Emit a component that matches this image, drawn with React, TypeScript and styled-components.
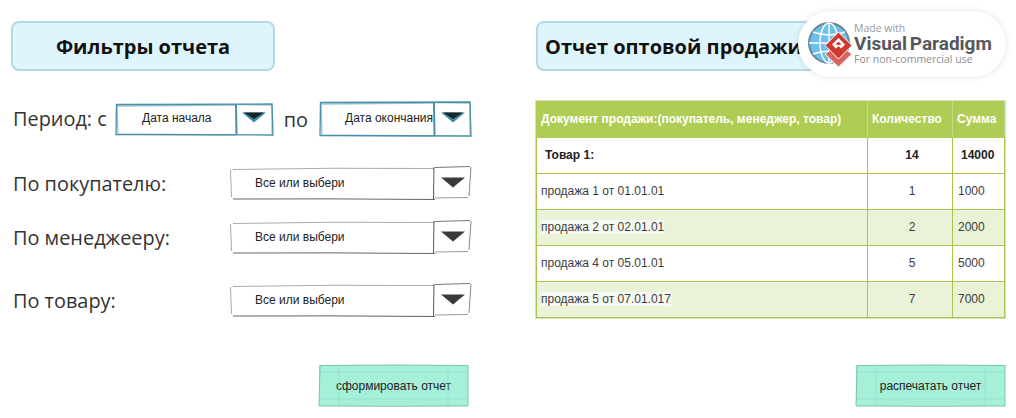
import React from 'react';
import styled, { createGlobalStyle } from 'styled-components';

const GlobalStyle = createGlobalStyle`
  html, body {
    margin: 0;
    padding: 0;
    background: #fff;
  }
`;

const Page = styled.div`
  position: relative;
  width: 1016px;
  height: 418px;
  overflow: hidden;
  display: flex;
  padding: 21px 0 0 11px;
  box-sizing: border-box;
  background: #fff;
`;

const LeftColumn = styled.section`
  width: 525px;
  flex: none;
`;

const RightColumn = styled.section`
  width: 470px;
  flex: none;
`;

const Title = styled.h2<{ $width: number; $center?: boolean }>`
  box-sizing: border-box;
  width: ${p => p.$width}px;
  height: 50px;
  margin: 0;
  padding: ${p => (p.$center ? '0' : '0 0 0 7px')};
  display: flex;
  align-items: center;
  justify-content: ${p => (p.$center ? 'center' : 'flex-start')};
  background: #dff5fd;
  border: 2px solid #b5d8e4;
  border-radius: 8px;
  font: 700 20px 'Open Sans', sans-serif;
  color: #111;
  white-space: nowrap;
`;

const FilterRow = styled.div<{ $top: number; $height: number }>`
  width: 460px;
  height: ${p => p.$height}px;
  margin-top: ${p => p.$top}px;
  display: flex;
  align-items: center;
`;

const Label = styled.span`
  margin-left: 2px;
  padding-bottom: 1px;
  font: 400 19.9px 'Open Sans', sans-serif;
  color: #333;
  white-space: nowrap;
`;

const Word = styled.span`
  margin-left: 11px;
  font: 400 19.9px 'Open Sans', sans-serif;
  color: #333;
`;

const SelectBox = styled.div<{ $width: number; $height: number; $left?: number }>`
  position: relative;
  flex: none;
  display: flex;
  width: ${p => p.$width}px;
  height: ${p => p.$height}px;
  margin-left: ${p => (p.$left === undefined ? 'auto' : `${p.$left}px`)};
`;

const SelectText = styled.div<{ $center?: boolean }>`
  flex: 1;
  min-width: 0;
  display: flex;
  align-items: center;
  justify-content: ${p => (p.$center ? 'center' : 'flex-start')};
  padding: 0 0 2px ${p => (p.$center ? '2px' : '25px')};
  font: 12px 'Liberation Sans', Arial, sans-serif;
  color: #222;
  white-space: nowrap;
`;

const ArrowCell = styled.div`
  flex: none;
  width: 37px;
  display: flex;
  align-items: center;
  justify-content: center;
  padding-bottom: 3px;
  box-sizing: border-box;
`;

const SketchLayer = styled.svg`
  position: absolute;
  left: 0;
  top: 0;
  overflow: visible;
  pointer-events: none;
`;

const ActionRow = styled.div<{ $top: number; $width: number }>`
  width: ${p => p.$width}px;
  margin-top: ${p => p.$top}px;
  display: flex;
  justify-content: flex-end;
`;

const ActionButton = styled.button`
  position: relative;
  width: 149px;
  height: 41px;
  padding: 0;
  border: 0;
  background: #a6efd9;
  font: 12px 'Liberation Sans', Arial, sans-serif;
  color: #222;
`;

const ReportTable = styled.table`
  margin-top: 30px;
  width: 469px;
  height: 217px;
  border-collapse: collapse;
  table-layout: fixed;
  outline: 1px solid #d4e2b6;
  font: 12px 'Liberation Sans', Arial, sans-serif;
  color: #333;
`;

const HeadCell = styled.th<{ $width?: number }>`
  width: ${p => (p.$width ? `${p.$width}px` : 'auto')};
  height: 36px;
  padding: 0 0 2px 4px;
  box-sizing: border-box;
  background: #afcd54;
  border: 1px solid #afcd54;
  border-right-color: #c5dc86;
  color: #fff;
  font-weight: 700;
  font-size: 12px;
  text-align: left;
  white-space: nowrap;
`;

const Row = styled.tr<{ $striped?: boolean }>`
  height: 36px;
  background: ${p => (p.$striped ? '#eaf2d7' : '#fff')};
`;

const Cell = styled.td<{ $align?: string; $bold?: boolean; $pad?: number }>`
  padding: 0 0 2px ${p => p.$pad ?? 4}px;
  border: 1px solid #a9c44f;
  text-align: ${p => p.$align ?? 'left'};
  font-weight: ${p => (p.$bold ? 700 : 400)};
  color: ${p => (p.$bold ? '#222' : '#3c3c3c')};
  white-space: nowrap;
`;

const Marked = styled.span`
  background: #f6f9f3;
`;

const Badge = styled.div`
  position: absolute;
  left: 798px;
  top: 11px;
  width: 208px;
  height: 66px;
  box-sizing: border-box;
  padding-left: 10px;
  display: flex;
  align-items: center;
  background: #fff;
  border-radius: 33px;
  box-shadow: 0 0 6px rgba(0, 0, 0, 0.12);
`;

const BadgeText = styled.div`
  display: flex;
  flex-direction: column;
  font-family: 'Open Sans', sans-serif;
  color: #999;
  white-space: nowrap;
`;

const BadgeSmall = styled.span`
  font-size: 10.5px;
  line-height: 13px;
`;

const BadgeName = styled.span`
  font: 700 19px/17px Roboto, 'Open Sans', sans-serif;
  word-spacing: -2px;
  color: #55585c;
`;

const BadgeTail = styled.span`
  font-size: 10.5px;
  line-height: 15px;
  color: #8e8e8e;
`;

type Tone = 'teal' | 'grey';

const Arrow: React.FC<{ tone: Tone }> = ({ tone }) => (
  <svg width="24" height="11" viewBox="0 0 24 11">
    <polygon points="0,0.5 24,0.5 12,10.5" fill={tone === 'teal' ? '#3f8ba6' : '#3a3a3a'} />
    {tone === 'teal' && <polygon points="2,0.5 22,0.5 12,7" fill="#17242a" />}
  </svg>
);

// hand drawn frame of a drop-down, split field + arrow cell
const SelectSketch: React.FC<{ w: number; h: number; tone: Tone }> = ({ w, h, tone }) => {
  const s = w - 37;
  if (tone === 'teal') {
    return (
      <SketchLayer width={w} height={h} fill="none" stroke="#4a8ea8" strokeWidth="1.3">
        <path d={`M0.5 0.5 L${w - 1} 0 L${w} ${h} L0 ${h - 0.5} Z`} />
        <path d={`M1 2 L${s} 1 M${s + 2} 0.5 L${w - 1} 1 L${w - 1} ${h - 1} M1 1 L2 ${h} M${s} ${h} L2 ${h - 1}`} opacity="0.55" />
        <path d={`M${s} 0 L${s + 0.5} ${h}`} strokeWidth="2" />
      </SketchLayer>
    );
  }
  return (
    <SketchLayer width={w} height={h} fill="none">
      <path d={`M3 1.5 Q${s / 2} -0.5 ${s} 0.5`} stroke="#a9a9a9" />
      <path d={`M3 ${h} Q${s / 2} ${h - 0.5} ${s + 1} ${h + 0.5}`} stroke="#666" />
      <path d={`M0.5 2 L1.5 ${h - 2}`} stroke="#aaa" />
      <path d={`M${s} -1 L${s - 0.5} ${h}`} stroke="#555" />
      <path d={`M${s + 1} -0.5 L${w - 1} -1.5`} stroke="#777" />
      <path d={`M${s + 1} ${h - 1} L${w - 3} ${h - 1.5}`} stroke="#999" />
      <path d={`M${w} -1 L${w - 2} ${h - 3}`} stroke="#888" />
    </SketchLayer>
  );
};

const ButtonSketch: React.FC = () => (
  <SketchLayer width="149" height="41" fill="none">
    <path d="M20 1 V41 M129 1 V41 M1 7 H148 M1 34 H148" stroke="#90e0c8" strokeWidth="0.7" />
    <path d="M1 0.5 Q75 -0.5 149 0.5 L149 41 Q75 41.5 0 41 Z" stroke="#7cc4ae" />
  </SketchLayer>
);

const Select: React.FC<{
  w: number;
  h: number;
  tone: Tone;
  text: string;
  center?: boolean;
  left?: number;
}> = ({ w, h, tone, text, center, left }) => (
  <SelectBox $width={w} $height={h} $left={left}>
    <SelectText $center={center}>{text}</SelectText>
    <ArrowCell>
      <Arrow tone={tone} />
    </ArrowCell>
    <SelectSketch w={w} h={h} tone={tone} />
  </SelectBox>
);

const GlobeLogo: React.FC = () => (
  <svg width="46" height="48" viewBox="0 0 46 48">
    <circle cx="21" cy="23" r="20" fill="#6cc0ee" stroke="#6e8691" strokeWidth="2" />
    <g fill="none" stroke="#fff" strokeWidth="1.4">
      <ellipse cx="21" cy="23" rx="9" ry="20" />
      <path d="M21 3 V43 M1 23 H41 M5 12 Q21 18 37 12 M5 34 Q21 28 37 34" />
    </g>
    <polygon points="17,34 30.5,24 44,34 30.5,47" fill="#d9645e" stroke="#fff" strokeWidth="1" />
    <polygon points="30.5,12 44,25.5 30.5,39 17,25.5" fill="#cc3a33" stroke="#fff" strokeWidth="1" />
    <polygon points="30.5,18 37,24.5 33,28.5 30.5,26 28,28.5 24,24.5" fill="#fff" />
    <polygon points="30.5,21.5 33.5,24.5 30.5,25 27.5,24.5" fill="#cc3a33" />
  </svg>
);

const rows = [
  { doc: 'продажа 1 от 01.01.01', qty: '1', sum: '1000' },
  { doc: 'продажа 2 от 02.01.01', qty: '2', sum: '2000', striped: true },
  { doc: 'продажа 4 от 05.01.01', qty: '5', sum: '5000' },
  { doc: 'продажа 5 от 07.01.017', qty: '7', sum: '7000', striped: true },
];

export default function App() {
  return (
    <Page>
      <GlobalStyle />
      <LeftColumn>
        <Title $width={264} $center>Фильтры отчета</Title>
        <FilterRow $top={31} $height={34}>
          <Label>Период: с</Label>
          <Select w={157} h={31} tone="teal" text="Дата начала" center left={9} />
          <Word>по</Word>
          <Select w={151} h={34} tone="teal" text="Дата окончания" />
        </FilterRow>
        <FilterRow $top={32} $height={31}>
          <Label>По покупателю:</Label>
          <Select w={241} h={31} tone="grey" text="Все или выбери" />
        </FilterRow>
        <FilterRow $top={23} $height={31}>
          <Label>По менеджееру:</Label>
          <Select w={241} h={31} tone="grey" text="Все или выбери" />
        </FilterRow>
        <FilterRow $top={32} $height={31}>
          <Label>По товару:</Label>
          <Select w={241} h={31} tone="grey" text="Все или выбери" />
        </FilterRow>
        <ActionRow $top={49} $width={457}>
          <ActionButton>
            сформировать отчет
            <ButtonSketch />
          </ActionButton>
        </ActionRow>
      </LeftColumn>
      <RightColumn>
        <Title $width={290}>Отчет оптовой продажи</Title>
        <ReportTable>
          <thead>
            <tr>
              <HeadCell>Документ продажи:(покупатель, менеджер, товар)</HeadCell>
              <HeadCell $width={85}>Количество</HeadCell>
              <HeadCell $width={52}>Сумма</HeadCell>
            </tr>
          </thead>
          <tbody>
            <Row>
              <Cell $bold $pad={8}>Товар 1:</Cell>
              <Cell $bold $align="center">14</Cell>
              <Cell $bold $pad={8}>14000</Cell>
            </Row>
            {rows.map(row => (
              <Row key={row.doc} $striped={row.striped}>
                <Cell>{row.striped ? <Marked>{row.doc}</Marked> : row.doc}</Cell>
                <Cell $align="center">{row.qty}</Cell>
                <Cell $pad={5}>{row.sum}</Cell>
              </Row>
            ))}
          </tbody>
        </ReportTable>
        <ActionRow $top={47} $width={469}>
          <ActionButton>
            распечатать отчет
            <ButtonSketch />
          </ActionButton>
        </ActionRow>
      </RightColumn>
      <Badge>
        <GlobeLogo />
        <BadgeText>
          <BadgeSmall>Made with</BadgeSmall>
          <BadgeName>Visual Paradigm</BadgeName>
          <BadgeTail>For non-commercial use</BadgeTail>
        </BadgeText>
      </Badge>
    </Page>
  );
}
